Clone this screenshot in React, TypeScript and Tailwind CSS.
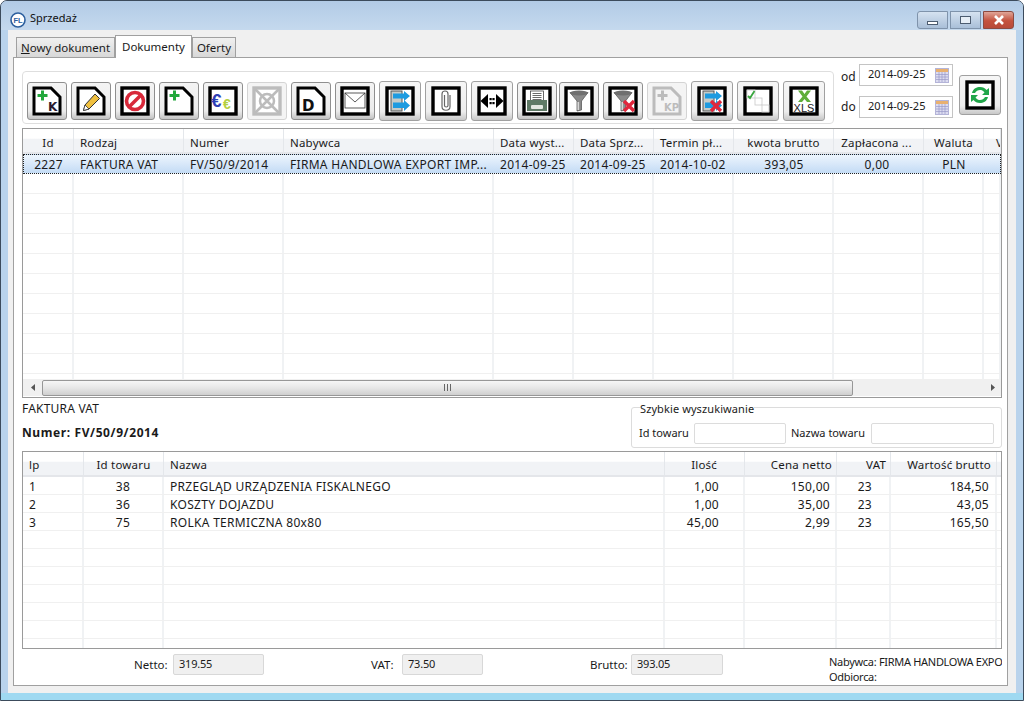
import React from "react";

const Doc = ({ c = "#000" }: { c?: string }) => <path d="M2 2H19L28 11V28H2Z" fill="#fff" stroke={c} strokeWidth="3" />;
const Box = ({ c = "#000" }: { c?: string }) => <rect x="2" y="2" width="26" height="26" fill="#fff" stroke={c} strokeWidth="3.4" />;
const Plus = ({ c = "#22a83c" }: { c?: string }) => <path d="M5.5 9.5h10M10.5 4.5v10" stroke={c} strokeWidth="3" fill="none" />;
const Arrows = () => (
  <g>
    <rect x="6" y="5" width="11" height="20" fill="#c5cbc8" stroke="#555" strokeWidth="1" />
    <path d="M8 7.5H19V5L25 10L19 15V12.5H8Z" fill="#1e9be0" />
    <path d="M8 16.5H19V14L25 19.5L19 25V22H8Z" fill="#1e9be0" />
  </g>
);
const Funnel = () => (
  <g>
    <path d="M6 6.5H24L17.5 15V24L13 25V15Z" fill="#8a8a8a" stroke="#5c5c5c" strokeWidth="0.8" />
    <ellipse cx="15" cy="7" rx="9" ry="2.6" fill="#6f6f6f" />
    <rect x="13.5" y="16" width="1.6" height="8" fill="#d8d8d8" />
  </g>
);
const RedX = ({ x = 16, y = 15 }: { x?: number; y?: number }) => (
  <path d={`M${x} ${y}L${x + 10} ${y + 10}M${x + 10} ${y}L${x} ${y + 10}`} stroke="#e0263c" strokeWidth="3.4" />
);
const Svg = ({ children }: { children: React.ReactNode }) => (
  <svg width="30" height="30" viewBox="0 0 30 30" className="block shrink-0">
    {children}
  </svg>
);

const icons: Record<string, React.ReactNode> = {
  k: (
    <>
      <Doc />
      <Plus />
      <text x="16" y="25" fontSize="12" fontWeight="700" fill="#2a1a30" fontFamily="DejaVu Sans">K</text>
    </>
  ),
  pencil: (
    <>
      <Doc />
      <path d="M19 8L23.5 12.5L13 23L7.5 24.5L9 19Z" fill="#f0c040" stroke="#333" strokeWidth="1" />
      <path d="M7.5 24.5L9 19L13 23Z" fill="#fff" stroke="#333" strokeWidth="0.8" />
    </>
  ),
  stop: (
    <>
      <Box />
      <circle cx="15" cy="15" r="8.5" fill="#fff" stroke="#d8293a" strokeWidth="3.6" />
      <path d="M9 21L21 9" stroke="#d8293a" strokeWidth="3.6" />
    </>
  ),
  plus: (
    <>
      <Doc />
      <Plus />
    </>
  ),
  euro: (
    <>
      <Box />
      <text x="3.5" y="21" fontSize="18" fill="#2f3fb5" fontWeight="700" fontFamily="Liberation Sans">€</text>
      <text x="15" y="23" fontSize="14" fontWeight="700" fill="#b4d040" fontFamily="Liberation Sans">€</text>
    </>
  ),
  crossed: (
    <>
      <Box c="#bcbcbc" />
      <path d="M3 3L27 27M27 3L3 27" stroke="#bcbcbc" strokeWidth="2.5" />
      <circle cx="15" cy="15" r="7" fill="none" stroke="#bcbcbc" strokeWidth="2.5" />
    </>
  ),
  d: (
    <>
      <Doc />
      <text x="6" y="25" fontSize="15" fontWeight="700" fill="#111" fontFamily="DejaVu Sans">D</text>
    </>
  ),
  mail: (
    <>
      <Box />
      <rect x="5" y="7" width="20" height="15" fill="#fff" stroke="#333" strokeWidth="0.8" />
      <path d="M5 7L15 16L25 7" fill="none" stroke="#333" strokeWidth="0.8" />
    </>
  ),
  export: (
    <>
      <Box />
      <Arrows />
    </>
  ),
  clip: (
    <>
      <Box />
      <path d="M19 9V20.5C19 25.5 11 25.5 11 20.5V8C11 4 17 4 17 8V19.5C17 21.5 13.5 21.5 13.5 19.5V9" fill="none" stroke="#666" strokeWidth="1.2" />
    </>
  ),
  link: (
    <>
      <Box />
      <path d="M3.5 15L11 8V22Z" fill="#000" />
      <path d="M26.5 15L19 8V22Z" fill="#000" />
      <rect x="12.5" y="12" width="2.2" height="2.2" fill="#000" />
      <rect x="12.5" y="16" width="2.2" height="2.2" fill="#000" />
      <rect x="15.4" y="12" width="2.2" height="2.2" fill="#000" />
      <rect x="15.4" y="16" width="2.2" height="2.2" fill="#000" />
    </>
  ),
  printer: (
    <>
      <Box />
      <rect x="8.5" y="5" width="13" height="11" fill="#fff" stroke="#444" strokeWidth="0.8" />
      <path d="M10.5 7.5h9M10.5 9.5h9M10.5 11.5h9M10.5 13.5h9" stroke="#444" strokeWidth="0.8" />
      <path d="M5 14H25V25H5Z" fill="#5f7a66" />
      <rect x="9" y="19" width="12" height="4" rx="1" fill="#e4e8e2" />
    </>
  ),
  funnel: (
    <>
      <Box />
      <Funnel />
    </>
  ),
  funnelx: (
    <>
      <Box />
      <Funnel />
      <RedX />
    </>
  ),
  kp: (
    <>
      <path d="M2 2H19L28 11V28H2Z" fill="#f4f4f4" stroke="#bcbcbc" strokeWidth="3" />
      <path d="M5.5 9.5h10M10.5 4.5v10" stroke="#bcbcbc" strokeWidth="3" />
      <text x="12" y="25" fontSize="10" fontWeight="700" fill="#bcbcbc" fontFamily="DejaVu Sans">KP</text>
    </>
  ),
  exportx: (
    <>
      <Box />
      <Arrows />
      <RedX x={14} y={15} />
    </>
  ),
  stairs: (
    <>
      <Box />
      <rect x="4" y="4" width="8" height="8" fill="#fff" stroke="#c8c8c8" strokeWidth="0.8" />
      <rect x="12" y="12" width="7" height="7" fill="#fff" stroke="#c8c8c8" strokeWidth="0.8" />
      <rect x="19" y="19" width="7" height="7" fill="#fff" stroke="#c8c8c8" strokeWidth="0.8" />
      <path d="M5 10L7 12L11.5 5" fill="none" stroke="#3aa63f" strokeWidth="1.8" />
    </>
  ),
  xls: (
    <>
      <Box />
      <path d="M9 4.5H13L15.5 8L18 4.5H22L17.5 10.5L22 16H18L15.5 13L13 16H9L13.5 10.5Z" fill="#5fae3a" />
      <text x="15" y="26" fontSize="11" textAnchor="middle" fill="#222" fontFamily="Liberation Sans">XLS</text>
    </>
  ),
  refresh: (
    <>
      <Box />
      <path d="M7 13C8 8.5 12 7 15 7C18 7 20 8 21.5 10L24 8V15H17L19.5 12.5C18 10.5 16.5 10 15 10C13 10 11 11 10 13Z" fill="#21a64a" />
      <path d="M23 17C22 21.5 18 23 15 23C12 23 10 22 8.5 20L6 22V15H13L10.5 17.5C12 19.5 13.5 20 15 20C17 20 19 19 20 17Z" fill="#21a64a" />
    </>
  ),
};

const normalBtn =
  "w-10 h-[38px] shrink-0 flex items-center justify-center rounded-[3px] border border-[#8f8f8f] bg-[linear-gradient(180deg,#f4f4f4_0%,#ebebeb_78%,#c4c4c4_100%)]";
const largeBtn =
  "w-[42px] h-10 shrink-0 flex items-center justify-center rounded-[3px] border border-[#a0a0a0] bg-[linear-gradient(180deg,#f6f6f6_0%,#ededed_78%,#c8c8c8_100%)]";
const offBtn =
  "w-10 h-[38px] shrink-0 flex items-center justify-center rounded-[3px] border border-[#d4d4d4] bg-[#f4f4f4]";

const toolbar: [string, string][] = [
  ["k", normalBtn],
  ["pencil", normalBtn],
  ["stop", normalBtn],
  ["plus", normalBtn],
  ["euro", normalBtn],
  ["crossed", offBtn],
  ["d", normalBtn],
  ["mail", normalBtn],
  ["export", largeBtn],
  ["clip", largeBtn],
  ["link", largeBtn],
  ["printer", normalBtn],
  ["funnel", normalBtn + " -ml-0.5"],
  ["funnelx", normalBtn],
  ["kp", offBtn],
  ["exportx", largeBtn],
  ["stairs", largeBtn],
  ["xls", largeBtn],
];

const topCols = [
  "w-[51px] text-center",
  "w-[110px] pl-1.5",
  "w-[100px] pl-1.5",
  "w-[210px] pl-1.5",
  "w-[80px] pl-1.5",
  "w-[80px] pl-1.5",
  "w-[80px] pl-1.5",
  "w-[100px] text-center",
  "w-[90px] text-center pr-1",
  "w-[60px] text-center",
  "w-[17px] pl-3",
];
const topHead = ["Id", "Rodzaj", "Numer", "Nabywca", "Data wyst...", "Data Sprz...", "Termin pł...", "kwota brutto", "Zapłacona ...", "Waluta", "V"];
const topRow = ["2227", "FAKTURA VAT", "FV/50/9/2014", "FIRMA HANDLOWA EXPORT IMP...", "2014-09-25", "2014-09-25", "2014-10-02", "393,05", "0,00", "PLN", ""];

const botCols = [
  "w-[61px] pl-1.5",
  "w-[80px] text-center",
  "w-[501px] pl-1.5",
  "w-[80px] text-right pr-6",
  "w-[92px] text-right pr-[5px]",
  "w-[54px] text-right pr-[17px]",
  "w-[106px] text-right pr-1.5",
];
const botHeadCols = [
  "w-[61px] pl-1.5",
  "w-[80px] text-center",
  "w-[501px] pl-1.5",
  "w-[80px] text-right pr-[27px]",
  "w-[92px] text-right pr-1",
  "w-[54px] text-right pr-1",
  "w-[106px] text-right pr-[5px]",
];
const botHead = ["lp", "Id towaru", "Nazwa", "Ilość", "Cena netto", "VAT", "Wartość brutto"];
const botRows = [
  ["1", "38", "PRZEGLĄD URZĄDZENIA FISKALNEGO", "1,00", "150,00", "23", "184,50"],
  ["2", "36", "KOSZTY DOJAZDU", "1,00", "35,00", "23", "43,05"],
  ["3", "75", "ROLKA TERMICZNA 80x80", "45,00", "2,99", "23", "165,50"],
];

const headBg = "bg-[linear-gradient(180deg,#ffffff_0%,#ffffff_40%,#f1f3f6_45%,#f1f3f6_100%)]";

function Row({ cols, cells, h }: { cols: string[]; cells: string[]; h: string }) {
  return (
    <div className={`flex shrink-0 border-b border-[#f0f0f0] tracking-[0.3px] ${h}`}>
      {cols.map((c, i) => (
        <div key={i} className={`${c} shrink-0 overflow-hidden whitespace-nowrap border-r-2 border-[#f0f2f4]`}>
          {cells[i]}
        </div>
      ))}
    </div>
  );
}

function Header({ cols, cells, h }: { cols: string[]; cells: string[]; h: string }) {
  return (
    <div className={`flex shrink-0 border-b-2 border-[#e4e6ea] text-[11.5px] tracking-[0.2px] ${headBg} ${h}`}>
      {cols.map((c, i) => (
        <div key={i} className={`${c} shrink-0 overflow-hidden whitespace-nowrap border-r border-[#e4e7eb]`}>
          {cells[i]}
        </div>
      ))}
    </div>
  );
}

function DateField({ value }: { value: string }) {
  return (
    <div className="flex h-[22px] w-[94px] items-center border border-[#c4c4c4] bg-white pl-2 text-[11px]">
      <span className="w-[67px] pb-0.5">{value}</span>
      <svg width="14" height="15" viewBox="0 0 14 15" className="shrink-0">
        <rect x="0.5" y="0.5" width="13" height="14" fill="#dcdcf0" stroke="#b4b4d8" />
        <rect x="1" y="1" width="12" height="3" fill="#e8b070" />
        <path d="M1 6.5h12M1 9h12M1 11.5h12M4 4v10M7 4v10M10 4v10" stroke="#9a9ac8" strokeWidth="0.7" />
      </svg>
    </div>
  );
}

export default function App() {
  return (
    <div className="flex h-[701px] w-[1024px] flex-col overflow-hidden whitespace-nowrap rounded-t-[7px] border border-[#3c4b5c] bg-[#b9d3ec] font-['Noto_Sans',sans-serif] text-[12px] text-[#1a1a1a]">
      <div className="flex h-[29px] shrink-0 items-center bg-[linear-gradient(180deg,#b2cbe6,#c5d9ee)] pl-[9px] pr-[9px] pt-2">
        <svg width="16" height="16" viewBox="0 0 16 16" className="shrink-0">
          <circle cx="8" cy="8" r="7" fill="#fff" stroke="#2c5f9e" strokeWidth="1.6" />
          <text x="8" y="10.8" fontSize="7.5" fontWeight="700" textAnchor="middle" fill="#2c5f9e" fontFamily="Liberation Sans">FL</text>
        </svg>
        <span className="mb-0.5 ml-1 text-[11px] text-[#111]">Sprzedaż</span>
        <div className="ml-auto flex items-start">
          <div className="flex h-[18px] w-[31px] items-center justify-center rounded-l-[3px] border border-[#7f93ab] bg-[linear-gradient(180deg,#d5e2f0,#a9bfd8)]">
            <div className="mt-1.5 h-[4px] w-[11px] border border-[#4c5c70] bg-white" />
          </div>
          <div className="ml-0.5 flex h-[18px] w-[31px] items-center justify-center border border-[#7f93ab] bg-[linear-gradient(180deg,#d5e2f0,#a9bfd8)]">
            <div className="h-[8px] w-[11px] border border-[#4c5c70] bg-[#e6eef6]" />
          </div>
          <div className="ml-0.5 flex h-[18px] w-[31px] items-center justify-center rounded-r-[3px] border border-[#8c4a40] bg-[linear-gradient(180deg,#e0a598,#c4523e_55%,#b84a3a)]">
            <svg width="12" height="10" viewBox="0 0 12 10">
              <path d="M2 1L10 9M10 1L2 9" stroke="#fff" strokeWidth="2.6" />
            </svg>
          </div>
        </div>
      </div>

      <div className="mx-[7px] flex h-[663px] shrink-0 flex-col bg-[#f0f0f0] pl-[5px] pr-2 pt-[5px]">
        <div className="flex h-[22px] shrink-0 items-end text-[11.5px]">
          <div className="ml-[3px] flex h-[20px] w-[99px] items-center justify-center border border-b-0 border-[#a0a0a0] bg-[linear-gradient(180deg,#f0f0f0,#d8d8d8)]">
            <span><span className="underline">N</span>owy dokument</span>
          </div>
          <div className="relative z-10 -mb-px flex h-[23px] w-[77px] items-start justify-center border border-b-0 border-[#a0a0a0] bg-white pt-0.5">
            Dokumenty
          </div>
          <div className="flex h-[20px] w-[44px] items-center justify-center border border-b-0 border-[#a0a0a0] bg-[linear-gradient(180deg,#f0f0f0,#d8d8d8)]">
            Oferty
          </div>
        </div>

        <div className="flex h-[629px] shrink-0 flex-col border border-[#a0a0a0] bg-white pl-2 pr-[5px]">
          <div className="flex h-[70px] shrink-0 items-start">
            <div className="mt-[13px] flex h-[53px] w-[812px] shrink-0 items-center gap-1 rounded-[4px] border border-[#dedede] pl-1 pt-[7px]">
              {toolbar.map(([k, cls]) => (
                <div key={k} className={cls}>
                  <Svg>{icons[k]}</Svg>
                </div>
              ))}
            </div>
            <div className="ml-[7px] mt-[6px] flex shrink-0 flex-col gap-[10px]">
              <div className="flex items-center">
                <span className="mt-1 w-[18px]">od</span>
                <DateField value="2014-09-25" />
              </div>
              <div className="flex items-center">
                <span className="w-[18px]">do</span>
                <DateField value="2014-09-25" />
              </div>
            </div>
            <div className={`${largeBtn} ml-[6px] mt-[17px]`}>
              <Svg>{icons.refresh}</Svg>
            </div>
          </div>

          <div className="flex h-[270px] shrink-0 flex-col overflow-hidden border border-[#9a9a9a]">
            <Header cols={topCols} cells={topHead} h="h-[25px] leading-[27px]" />
            <div className="flex h-[20px] shrink-0 border border-dotted border-[#222] bg-[linear-gradient(180deg,#edf5fd,#c3dbf5)] leading-[19px] tracking-[0.3px]">
              {topCols.map((c, i) => (
                <div key={i} className={`${c} shrink-0 overflow-hidden whitespace-nowrap first:-ml-px`}>
                  {topRow[i]}
                </div>
              ))}
            </div>
            <div className="h-[205px] shrink-0 overflow-hidden">
              {Array.from({ length: 11 }).map((_, i) => (
                <Row key={i} cols={topCols} cells={[]} h="h-[20px]" />
              ))}
            </div>
            <div className="flex h-[17px] shrink-0 items-center bg-[#f0f0f0]">
              <div className="flex w-[19px] shrink-0 justify-center">
                <svg width="4" height="7" viewBox="0 0 4 7"><path d="M4 0V7L0 3.5Z" fill="#555" /></svg>
              </div>
              <div className="flex h-[16px] w-[811px] shrink-0 items-center justify-center rounded-[2px] border border-[#979797] bg-[linear-gradient(180deg,#f6f6f6,#e6e6e6_50%,#cfcfcf)]">
                <svg width="8" height="7" viewBox="0 0 8 7"><path d="M0.5 0V7M3.5 0V7M6.5 0V7" stroke="#666" /></svg>
              </div>
              <div className="ml-auto flex w-[17px] shrink-0 justify-center">
                <svg width="4" height="7" viewBox="0 0 4 7"><path d="M0 0V7L4 3.5Z" fill="#555" /></svg>
              </div>
            </div>
          </div>

          <div className="flex h-[53px] shrink-0">
            <div className="flex w-[609px] shrink-0 flex-col">
              <div className="mt-[4px] leading-[14px] tracking-[0.2px]">FAKTURA VAT</div>
              <div className="mt-[10px] font-bold leading-[14px] tracking-[0.6px]">Numer: FV/50/9/2014</div>
            </div>
            <div className="relative mt-[9px] flex h-[41px] w-[371px] shrink-0 items-center rounded-[3px] border border-[#dcdcdc] pl-[7px] pt-[11px] text-[11px]">
              <span className="absolute -top-1.5 left-2 bg-white leading-[14px] tracking-[0.1px]">Szybkie wyszukiwanie</span>
              <span className="w-[55px] shrink-0">Id towaru</span>
              <div className="h-[21px] w-[92px] shrink-0 rounded-[2px] border border-[#dcdcdc] bg-white" />
              <span className="ml-[5px] w-[80px] shrink-0">Nazwa towaru</span>
              <div className="h-[21px] w-[123px] shrink-0 rounded-[2px] border border-[#dcdcdc] bg-white" />
            </div>
          </div>

          <div className="flex h-[198px] shrink-0 flex-col overflow-hidden border border-[#9a9a9a]">
            <Header cols={botHeadCols} cells={botHead} h="h-[25px] leading-[26px]" />
            <div className="flex-1 overflow-hidden">
              {Array.from({ length: 10 }).map((_, i) => (
                <Row key={i} cols={botCols} cells={botRows[i] ?? []} h="h-[18px] leading-[20px]" />
              ))}
            </div>
          </div>

          <div className="flex h-[37px] shrink-0 items-start pt-[5px] text-[11.5px]">
            <span className="ml-[112px] w-[39px] shrink-0 leading-[22px]">Netto:</span>
            <div className="flex h-[21px] w-[91px] shrink-0 items-center rounded-[2px] border border-[#d8d8d8] bg-[#f0f0f0] pl-[5px] text-[11px] tracking-[-0.2px]">319.55</div>
            <span className="ml-[107px] w-[31px] shrink-0 leading-[22px]">VAT:</span>
            <div className="flex h-[21px] w-[81px] shrink-0 items-center rounded-[2px] border border-[#d8d8d8] bg-[#f0f0f0] pl-[5px] text-[11px] tracking-[-0.2px]">73.50</div>
            <span className="ml-[107px] w-[41px] shrink-0 leading-[22px]">Brutto:</span>
            <div className="flex h-[21px] w-[92px] shrink-0 items-center rounded-[2px] border border-[#d8d8d8] bg-[#f0f0f0] pl-[5px] text-[11px] tracking-[-0.2px]">393.05</div>
            <div className="ml-[106px] w-[173px] shrink-0 overflow-hidden whitespace-nowrap text-[11px] leading-[15px] tracking-[-0.3px]">
              <div>Nabywca: FIRMA HANDLOWA EXPO</div>
              <div>Odbiorca:</div>
            </div>
          </div>
        </div>
      </div>

      <div className="flex-1 bg-[#9fd9f1]" />
    </div>
  );
}
